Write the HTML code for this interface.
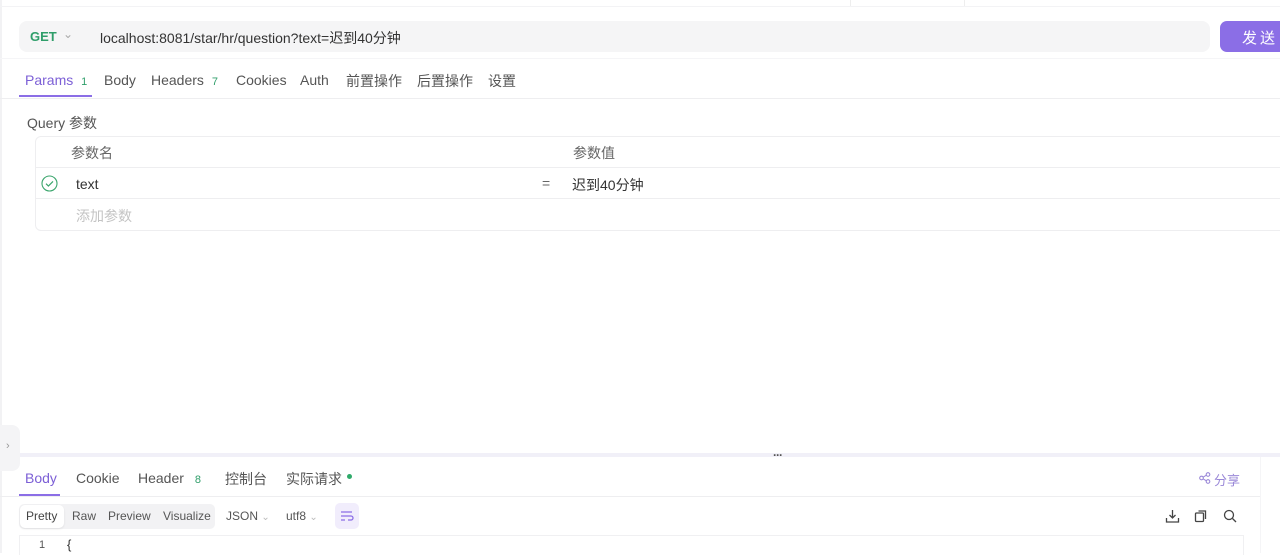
<!DOCTYPE html>
<html><head><meta charset="utf-8"><style>
*{box-sizing:border-box;margin:0;padding:0}
body{width:1280px;height:553px;overflow:hidden;background:#fff;font-family:"Liberation Sans","Noto Sans CJK SC",sans-serif;font-size:14px;color:#333;position:relative}
.a{position:absolute;white-space:nowrap}
.hl{position:absolute;height:1px;background:#eeeef0}
</style></head><body>
<div class="a" style="left:0;top:0;width:2px;height:553px;background:#f2f2f4"></div>
<div class="a" style="left:850px;top:0;width:115px;height:6px;border-left:1px solid #eee;border-right:1px solid #eee"></div>
<div class="hl" style="left:0;top:6px;width:1280px;background:#f3f3f5"></div>
<div class="a" style="left:19px;top:21px;width:1191px;height:31px;background:#f5f5f6;border-radius:8px"></div>
<div class="a" style="left:30px;top:29px;font-size:13px;font-weight:bold;color:#2f9e6a">GET</div>
<div class="a" style="left:63px;top:27px;font-size:12px;color:#aaa">&#8964;</div>
<div class="a" style="left:100px;top:28px;font-size:14px;color:#333">localhost:8081/star/hr/question?text=迟到40分钟</div>
<div class="a" style="left:1220px;top:21px;width:70px;height:31px;background:#8b6ee6;border-radius:7px;color:#fff;font-size:15px;padding:6px 0 0 22px;letter-spacing:3px">发送</div>
<div class="hl" style="left:0;top:58px;width:1280px;background:#f5f5f7"></div>
<div class="a" style="left:25px;top:72px;color:#7c5fd6">Params <span style="font-size:11px;color:#2f9e6a;margin-left:4px">1</span></div>
<div class="a" style="left:19px;top:95px;width:73px;height:2px;background:#8b6ee6"></div>
<div class="a" style="left:104px;top:72px;color:#555">Body</div>
<div class="a" style="left:151px;top:72px;color:#555">Headers <span style="font-size:11px;color:#2f9e6a;margin-left:4px">7</span></div>
<div class="a" style="left:236px;top:72px;color:#555">Cookies</div>
<div class="a" style="left:300px;top:72px;color:#555">Auth</div>
<div class="a" style="left:346px;top:71px;color:#555">前置操作</div>
<div class="a" style="left:417px;top:71px;color:#555">后置操作</div>
<div class="a" style="left:488px;top:71px;color:#555">设置</div>
<div class="hl" style="left:0;top:98px;width:1280px"></div>
<div class="a" style="left:27px;top:113px;color:#555">Query 参数</div>
<div class="a" style="left:35px;top:136px;width:1260px;height:95px;border:1px solid #eeeef0;border-radius:6px"></div>
<div class="hl" style="left:35px;top:167px;width:1245px"></div>
<div class="hl" style="left:35px;top:198px;width:1245px"></div>
<div class="a" style="left:71px;top:143px;color:#666">参数名</div>
<div class="a" style="left:573px;top:143px;color:#666">参数值</div>
<svg class="a" style="left:41px;top:175px" width="17" height="17" viewBox="0 0 17 17"><circle cx="8.5" cy="8.5" r="7.5" fill="none" stroke="#3aa56c" stroke-width="1.1"/><path d="M5 8.7l2.4 2.3 4.6-4.6" fill="none" stroke="#3aa56c" stroke-width="1.2"/></svg>
<div class="a" style="left:76px;top:176px;color:#333">text</div>
<div class="a" style="left:542px;top:175px;color:#666">=</div>
<div class="a" style="left:572px;top:175px;color:#333">迟到40分钟</div>
<div class="a" style="left:76px;top:206px;color:#c4c4c4">添加参数</div>
<div class="a" style="left:0;top:425px;width:20px;height:46px;background:#f4f4f6;border-radius:0 8px 8px 0;color:#999;font-size:11px;padding:15px 0 0 6px">›</div>
<div class="a" style="left:20px;top:453px;width:1260px;height:4px;background:#f1f0f8"></div>
<div class="a" style="left:773px;top:448px;font-size:12px;color:#555;letter-spacing:-1px;font-weight:bold">···</div>
<div class="a" style="left:1260px;top:457px;width:1px;height:96px;background:#f5f5f7"></div>
<div class="a" style="left:25px;top:470px;color:#7c5fd6">Body</div>
<div class="a" style="left:19px;top:494px;width:41px;height:2px;background:#8b6ee6"></div>
<div class="a" style="left:76px;top:470px;color:#555">Cookie</div>
<div class="a" style="left:138px;top:470px;color:#555">Header <span style="font-size:11px;color:#2f9e6a;margin-left:7px">8</span></div>
<div class="a" style="left:225px;top:469px;color:#555">控制台</div>
<div class="a" style="left:286px;top:469px;color:#555">实际请求</div>
<div class="a" style="left:347px;top:474px;width:5px;height:5px;border-radius:50%;background:#2faa6a"></div>
<svg class="a" style="left:1199px;top:472px" width="12" height="12" viewBox="0 0 12 12"><circle cx="9" cy="2.5" r="1.8" fill="none" stroke="#9a88d8" stroke-width="1.1"/><circle cx="2.5" cy="6" r="1.8" fill="none" stroke="#9a88d8" stroke-width="1.1"/><circle cx="9" cy="9.5" r="1.8" fill="none" stroke="#9a88d8" stroke-width="1.1"/><path d="M4 5.2l3.4-2M4 6.8l3.4 2" stroke="#9a88d8" stroke-width="1.1"/></svg>
<div class="a" style="left:1214px;top:470px;color:#9a88d8;font-size:13px">分享</div>
<div class="hl" style="left:0;top:496px;width:1260px"></div>
<div class="a" style="left:19px;top:504px;width:196px;height:25px;background:#f2f2f4;border-radius:5px"></div>
<div class="a" style="left:20px;top:505px;width:44px;height:23px;background:#fff;border-radius:5px;box-shadow:0 1px 2px rgba(0,0,0,.08)"></div>
<div class="a" style="left:26px;top:509px;font-size:12px;color:#444">Pretty</div>
<div class="a" style="left:72px;top:509px;font-size:12px;color:#555">Raw</div>
<div class="a" style="left:108px;top:509px;font-size:12px;color:#555">Preview</div>
<div class="a" style="left:163px;top:509px;font-size:12px;color:#555">Visualize</div>
<div class="a" style="left:226px;top:509px;font-size:12px;color:#555">JSON <span style="color:#bbb;font-size:10px">&#8964;</span></div>
<div class="a" style="left:286px;top:509px;font-size:12px;color:#555">utf8 <span style="color:#bbb;font-size:10px">&#8964;</span></div>
<div class="a" style="left:335px;top:503px;width:24px;height:26px;background:#f1edfc;border-radius:5px"></div>
<svg class="a" style="left:340px;top:510px" width="14" height="12" viewBox="0 0 14 12"><path d="M1 2h11M1 6h10a2 2 0 010 4H8M1 10h4" fill="none" stroke="#8b6ee6" stroke-width="1.3"/></svg>
<svg class="a" style="left:1165px;top:509px" width="15" height="15" viewBox="0 0 15 15"><path d="M7.5 1v8M4.5 6l3 3 3-3M1.5 9v4h12V9" fill="none" stroke="#444" stroke-width="1.3"/></svg>
<svg class="a" style="left:1194px;top:509px" width="14" height="14" viewBox="0 0 14 14"><rect x="1.5" y="4" width="8" height="8.5" rx="1" fill="none" stroke="#444" stroke-width="1.3"/><path d="M4.5 2h7v8" fill="none" stroke="#444" stroke-width="1.3"/></svg>
<svg class="a" style="left:1223px;top:509px" width="14" height="14" viewBox="0 0 14 14"><circle cx="6" cy="6" r="4.5" fill="none" stroke="#444" stroke-width="1.3"/><path d="M9.5 9.5L13 13" stroke="#444" stroke-width="1.3"/></svg>
<div class="a" style="left:19px;top:535px;width:1225px;height:20px;border:1px solid #f0f0f2;border-bottom:none"></div>
<div class="a" style="left:39px;top:539px;font-size:11px;color:#555">1</div>
<div class="a" style="left:67px;top:537px;font-size:13px;color:#333">{</div>
</body></html>
